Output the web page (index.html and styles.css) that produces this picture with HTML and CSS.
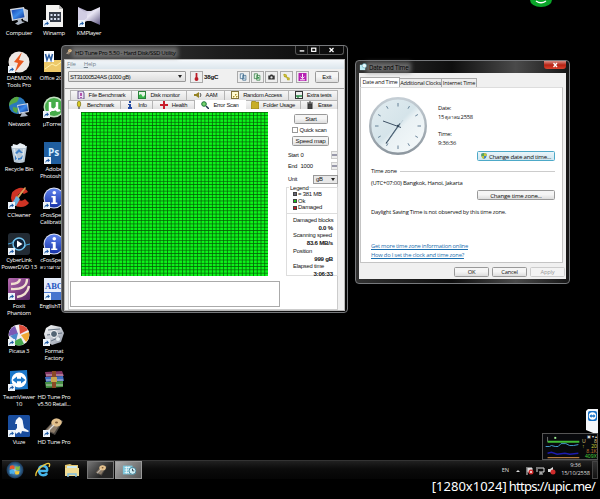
FILE: index.html
```html
<!DOCTYPE html>
<html lang="en">
<head>
<meta charset="utf-8">
<title>Desktop</title>
<link rel="stylesheet" href="styles.css">
</head>
<body>
<svg class="defs" width="0" height="0">
  <defs>
    <linearGradient id="blue" x1="0" y1="0" x2="1" y2="1"><stop offset="0" stop-color="#123fae"/><stop offset=".5" stop-color="#3d8bea"/><stop offset="1" stop-color="#0a2c8c"/></linearGradient>
    <linearGradient id="info" x1="0" y1="0" x2="0" y2="1"><stop offset="0" stop-color="#5f83ee"/><stop offset="1" stop-color="#1833a8"/></linearGradient>
    <linearGradient id="silver" x1="0" y1="0" x2="1" y2="1"><stop offset="0" stop-color="#fff"/><stop offset="1" stop-color="#8b94a3"/></linearGradient>
    <linearGradient id="purple" x1="0" y1="0" x2="1" y2="1"><stop offset="0" stop-color="#b66bb0"/><stop offset="1" stop-color="#512060"/></linearGradient>
    <linearGradient id="km" x1="0" y1="0" x2="1" y2="1"><stop offset="0" stop-color="#9a94b8"/><stop offset=".5" stop-color="#e9e6f4"/><stop offset="1" stop-color="#5d5680"/></linearGradient>
    <radialGradient id="orb"><stop offset="0" stop-color="#a8d5f2"/><stop offset=".6" stop-color="#356fa0"/><stop offset="1" stop-color="#1b3552"/></radialGradient>
    <linearGradient id="face" x1="0" y1="0" x2="1" y2="1"><stop offset="0" stop-color="#e3edf1"/><stop offset=".48" stop-color="#d5e4ea"/><stop offset=".55" stop-color="#e9f1f4"/><stop offset="1" stop-color="#f8fbfc"/></linearGradient>
    <linearGradient id="rim" x1="0" y1="0" x2="0" y2="1"><stop offset="0" stop-color="#c5ced5"/><stop offset="1" stop-color="#8d979f"/></linearGradient>
    <pattern id="cells" width="3.74" height="3.28" patternUnits="userSpaceOnUse"><rect width="3.74" height="3.28" fill="#045e06"/><rect x=".75" y=".7" width="2.99" height="2.58" fill="#0cf41a"/></pattern>
    <symbol id="arrow" viewBox="0 0 7 7"><rect width="7" height="7" fill="#eef4fa"/><path d="M1.4 6Q1.2 3 3.8 2.7V1.2L6 3.4 3.8 5.2V4Q2.2 4 1.4 6" fill="#1d5aa4"/></symbol>
    <symbol id="pc" viewBox="0 0 22 22"><path d="M15 3l5 2v12l-5-2z" fill="#c2c9d4"/><path d="M2 4l14-2 2 11-14 3z" fill="#d4d9e2"/><path d="M3.5 5.2l11.5-1.7 1.5 8.7-11.2 2.3z" fill="url(#blue)"/><path d="M9 14l4-.6 1 3 3 .5-7 3-3-1.5 3-1.6z" fill="#aeb7c4"/></symbol>
    <symbol id="disk" viewBox="0 0 22 22"><path d="M2 15L13 3l7 3-8 14z" fill="#4c4742"/><path d="M3 15L13 4l6 2-8 12z" fill="#8b7b69"/><ellipse cx="13.5" cy="7.5" rx="5.2" ry="4" fill="#e3c18d"/><ellipse cx="13.5" cy="7.5" rx="1.5" ry="1.1" fill="#7a5836"/><path d="M5 16l6-6" stroke="#ddd" stroke-width="1.3"/></symbol>
    <symbol id="infoball" viewBox="0 0 22 22"><circle cx="11" cy="11" r="10.5" fill="#dfe4f5"/><circle cx="11" cy="11" r="9.5" fill="url(#info)"/><circle cx="11.3" cy="5.7" r="1.8" fill="#fff"/><path d="M8.4 9h4.3v6.5h1.6v1.6H8.2v-1.6h1.6v-5H8.4z" fill="#fff"/></symbol>
  </defs>
</svg>
<main class="desktop">
  <section class="icons">
    <div class="item"><svg viewBox="0 0 22 22"><use href="#pc"/></svg><span>Computer</span></div>
    <div class="item"><svg viewBox="0 0 22 22"><circle cx="11" cy="11" r="10.5" fill="#eee8e4"/><path d="M14 1L6 11l4 1-3 9 9-11-5-1z" fill="#ea5a20"/><use href="#arrow" y="15" width="7" height="7"/></svg><span>DAEMON<br>Tools Pro</span></div>
    <div class="item"><svg viewBox="0 0 22 22"><circle cx="9.500" cy="9.500" r="8.500" fill="#2a78bd"/><path d="M4 3q5-4 7-1l-2 4-5 2-3 2q0-5 3-7M5 11l5 1-1 5q-5-1-4-6" fill="#58a743"/><path d="M9 9l11-2 1 9-10 2z" fill="#cfd6e2"/><path d="M10 10l9-1.700 1 6.700-8 1.600z" fill="url(#blue)"/><path d="M14 17h3l3 3-8 1z" fill="#aab4c4"/></svg><span>Network</span></div>
    <div class="item"><svg viewBox="0 0 22 22"><path d="M3 4h16l-2.500 16q-5 2-10.500 0z" fill="#b9c8d6"/><path d="M5 2l4 1 3-2 5 2 1 3H4z" fill="#e9f0f5"/><path d="M6 7l3 11M16 7l-2 11" stroke="#dbe7f0" stroke-width="1.500"/><path d="M7 11l4-4 4 4h-2l-2-1-2 2zM7 13l2 4-2 1zM15 13l-1 4-4 1v-2h2z" fill="#3e7fc6"/></svg><span>Recycle Bin</span></div>
    <div class="item"><svg viewBox="0 0 22 22"><path d="M20 5Q17 0 11 1 3 3 3 11q1 9 10 9 5 0 8-4l-4-4q-3 3-6 1-3-5 1-7 2-1 4 1z" fill="#cf3324"/><path d="M17 0l1 1-8 11-2-1z" fill="#d6a45c"/><path d="M8 9l4 3-4 7-7-1q5-3 7-9" fill="#6fb1dc"/><use href="#arrow" y="15" width="7" height="7"/></svg><span>CCleaner</span></div>
    <div class="item"><svg viewBox="0 0 22 22"><rect width="22" height="22" rx="3" fill="#222b34"/><path d="M0 11q5 0 6-4M22 11q-5 0-6 4" stroke="#48a6de" fill="none"/><circle cx="11" cy="11" r="6" fill="#0d2036" stroke="#72c5f0" stroke-width="1.400"/><path d="M9 7.500l5.500 3.500L9 14.500z" fill="#fff"/><use href="#arrow" y="15" width="7" height="7"/></svg><span>CyberLink<br>PowerDVD 13</span></div>
    <div class="item"><svg viewBox="0 0 22 22"><rect width="22" height="22" rx="1.500" fill="url(#purple)"/><path d="M19 1q0 11-16 10M12 1q-1 5-9 5M21 8q-2 10-12 11" fill="none" stroke="#f0dfcf" stroke-width="2.400"/><use href="#arrow" y="15" width="7" height="7"/></svg><span>Foxit<br>Phantom</span></div>
    <div class="item"><svg viewBox="0 0 22 22"><circle cx="11" cy="11" r="10.500" fill="#f1eff2"/><path d="M11 1q6 0 9 5l-8 4z" fill="#dc4a38"/><path d="M21 8q1 7-3 10l-5-7z" fill="#f0a934"/><path d="M16 20q-7 4-12-2l9-4z" fill="#48a94f"/><path d="M1 12q-1-7 6-10l3 8z" fill="#7c5ab5"/><path d="M2 12l8-3-2 8z" fill="#4c8acb"/><use href="#arrow" y="15" width="7" height="7"/></svg><span>Picasa 3</span></div>
    <div class="item"><svg viewBox="0 0 22 22"><path d="M2 2l17-1 1 19-18 1z" fill="#1b78ca"/><circle cx="11" cy="11" r="7.500" fill="#fff"/><path d="M4.500 11L9 7.500v2.300h4V7.500l4.500 3.500-4.500 3.500v-2.300H9v2.300z" fill="#1b78ca"/><use href="#arrow" y="15" width="7" height="7"/></svg><span>TeamViewer<br>10</span></div>
    <div class="item"><svg viewBox="0 0 22 22"><rect width="22" height="22" rx="1.500" fill="#194d9e"/><path d="M11 2q4 1 4 6l1 5 5 3-1 1-6-1-1 3-2-2-3 2-1-2-2 1 4-5 0-4-2 0 1-4z" fill="#f4f8fc"/><use href="#arrow" y="15" width="7" height="7"/></svg><span>Vuze</span></div>
    <div class="item"><svg viewBox="0 0 22 22"><path d="M3 0h13l4 4v18H3z" fill="#f4f3f1"/><path d="M16 0v4h4z" fill="#b8b7b7"/><path d="M6 7h12v10H6z" fill="#353c48"/><path d="M7.500 9h2v2h-2zM11 9h2v2h-2zM14.500 9h2v2h-2zM7.500 13h2v2h-2zM11 13h2v2h-2zM14.500 13h2v2h-2z" fill="#d5def0"/><use href="#arrow" y="15" width="7" height="7"/></svg><span>Winamp</span></div>
    <div class="item"><svg viewBox="0 0 22 22"><rect x="1" y="9" width="21" height="12" fill="#edc969"/><path d="M2 18l7-5 4 2 8-6" fill="none" stroke="#fff2ae"/><rect x="1" y="0" width="10" height="11" fill="#fafcff"/><path d="M2.500 3l1.500 6 2-5 2 5 1.500-6" fill="none" stroke="#285a9f" stroke-width="1.500"/></svg><span>Office 2010</span></div>
    <div class="item"><svg viewBox="0 0 22 22"><circle cx="11" cy="11" r="10.500" fill="#c2dfc0"/><circle cx="11" cy="11" r="9" fill="#46ad4a"/><path d="M7 16V6M7 12q4 4 7-1V6v8q1 1 3 0" fill="none" stroke="#fff" stroke-width="2.500"/><use href="#arrow" y="15" width="7" height="7"/></svg><span>µTorrent</span></div>
    <div class="item"><svg viewBox="0 0 22 22"><rect x="1" width="21" height="22" fill="#205e9f"/><text class="ps" x="5" y="14">Ps</text><use href="#arrow" x="1" y="15" width="7" height="7"/></svg><span>Adobe<br>Photoshop</span></div>
    <div class="item"><svg viewBox="0 0 22 22"><use href="#infoball"/><use href="#arrow" y="15" width="7" height="7"/></svg><span>cFosSpeed<br>Calibration</span></div>
    <div class="item"><svg viewBox="0 0 22 22"><use href="#infoball"/><use href="#arrow" y="15" width="7" height="7"/></svg><span>cFosSpeed<br><small>ความสามารถ</small></span></div>
    <div class="item"><svg viewBox="0 0 22 22"><rect x="1" width="21" height="22" fill="#e5ecfa"/><path d="M1 14h21v8H1z" fill="#4674ce"/><text class="abc" x="2" y="11">ABC</text><use href="#arrow" x="1" y="15" width="7" height="7"/></svg><span>EnglishThai</span></div>
    <div class="item"><svg viewBox="0 0 22 22"><path d="M3 4l5-3 10 2 3 6-3 9-9 3-6-4-2-7z" fill="url(#silver)"/><path d="M5 6l12-1M4 11l15-2M8 17l9-4" stroke="#647281"/><circle cx="11" cy="10" r="3.500" fill="#536574" stroke="#fff"/><circle cx="15" cy="15" r="2" fill="#e6edf0"/><use href="#arrow" y="15" width="7" height="7"/></svg><span>Format<br>Factory</span></div>
    <div class="item"><svg viewBox="0 0 22 22"><path d="M2 3l17-1 2 5-18 1z" fill="#853765"/><path d="M2 8l18-1 1 5-18 1z" fill="#3d6cc0"/><path d="M2 13l18-1v6l-17 1z" fill="#479346"/><path d="M3 6h17M3 11h17M3 16h17" stroke="#e3d4d8" stroke-width=".8"/><path d="M9 2h4v17H9z" fill="#8a4a26"/><rect x="8" y="8" width="6" height="5" fill="#c7a64f"/></svg><span>HD Tune Pro<br>v5.50 Retail...</span></div>
    <div class="item"><svg viewBox="0 0 22 22"><use href="#disk"/><use href="#arrow" y="15" width="7" height="7"/></svg><span>HD Tune Pro</span></div>
    <div class="item"><svg viewBox="0 0 22 22"><path d="M0 2l9 4h4l9-4v18l-9-4H9l-9 4z" fill="url(#km)"/><path d="M0 2l9 7v4l-9 7z" fill="#d1cde3"/><use href="#arrow" y="15" width="7" height="7"/></svg><span>KMPlayer</span></div>
  </section>

  <section class="window hd">
    <header class="caption"><svg class="cap-icon" viewBox="0 0 22 22"><use href="#disk"/></svg><span>HD Tune Pro 5.50 - Hard Disk/SSD Utility</span>
      <div class="controls"><i><svg viewBox="0 0 12 8"><path d="M4 5h5" stroke="#fff" stroke-width="1.500"/></svg></i><i><svg viewBox="0 0 12 8"><rect x="4" y="2" width="4.500" height="3.500" fill="none" stroke="#fff" stroke-width="1.300"/></svg></i><i class="last"><svg viewBox="0 0 16 8"><path d="M6 2l4 4M10 2L6 6" stroke="#fff" stroke-width="1.300"/></svg></i></div>
    </header>
    <div class="client">
      <nav class="menu"><span><u>F</u>ile</span><span><u>H</u>elp</span></nav>
      <div class="toolbar">
        <div class="drive"><span>ST31000524AS (1000 gB)</span><b class="down"></b></div>
        <div class="tool thermo"><svg viewBox="0 0 10 10"><path d="M5 0v6" stroke="#bb1b25" stroke-width="2.200"/><circle cx="5" cy="7.500" r="2.400" fill="#bb1b25"/></svg></div>
        <strong>38gC</strong>
        <div class="tools">
          <div class="tool"><svg viewBox="0 0 10 10"><path d="M1 1h4v6H1zM4 3h4v6H4z" fill="#eaf4fb" stroke="#376588" stroke-width=".9"/><path d="M5 5h2M5 7h2" stroke="#376588" stroke-width=".6"/></svg></div>
          <div class="tool"><svg viewBox="0 0 10 10"><path d="M1 1h4v6H1zM4 3h4v6H4z" fill="#dff3df" stroke="#337c43" stroke-width=".9"/><path d="M5 5h2v2H5z" fill="#3a9a55"/></svg></div>
          <div class="tool"><svg viewBox="0 0 10 10"><path d="M1 3h2l1-1h2l1 1h2v5H1z" fill="#333"/><circle cx="5" cy="5.500" r="1.400" fill="#e4e4e4"/></svg></div>
          <div class="tool"><svg viewBox="0 0 10 10"><path d="M2 1l3 1 1 3 3 1v3H6L5 6 2 5 1 2z" fill="#b8aa20"/><path d="M3 3l1 1M7 7l1 1" stroke="#fff69b"/></svg></div>
          <div class="tool"><svg viewBox="0 0 10 10"><rect width="10" height="10" fill="#b521b2"/><path d="M5 1v5M2.500 4.500L5 7l2.500-2.500M2 8.500h6" fill="none" stroke="#fff" stroke-width="1.200"/></svg></div>
        </div>
        <button class="exit">Exit</button>
      </div>
      <div class="tabs back">
        <span><svg viewBox="0 0 8 8"><path d="M1 0h5l1 2v6H1z" fill="#e9e0f5" stroke="#45336d" stroke-width=".8"/><path d="M4 2v3M4 6v1" stroke="#a12491" stroke-width="1.500"/></svg>File Benchmark</span>
        <span><svg viewBox="0 0 8 8"><rect x=".5" y=".5" width="7" height="7" fill="#e5f5e5" stroke="#2b823c"/><path d="M1 7V4l2-1 2 3 2-2v3z" fill="#37b64a"/></svg>Disk monitor</span>
        <span><svg viewBox="0 0 8 8"><path d="M0 3h2l3-2v6L2 5H0z" fill="#958224"/><path d="M6 2q2 2 0 4" fill="none" stroke="#555"/></svg>AAM</span>
        <span><svg viewBox="0 0 8 8"><rect x=".5" y=".5" width="7" height="7" fill="#fffbd1" stroke="#81733a"/><path d="M2 6h1V5M4 4h1V3M5 6h1V5" stroke="#b49423"/></svg>Random Access</span>
        <span><svg viewBox="0 0 8 8"><rect x=".5" y=".5" width="7" height="7" fill="#eee" stroke="#333"/><path d="M1 5h6M3 5v2" stroke="#278844" stroke-width="1.300"/></svg>Extra tests</span>
      </div>
      <div class="tabs front">
        <span><svg viewBox="0 0 8 8"><ellipse cx="4" cy="3" rx="1.700" ry="3" fill="#dbcc22" stroke="#78711b" stroke-width=".7"/><path d="M3 7h2" stroke="#666" stroke-width="1.500"/></svg>Benchmark</span>
        <span><svg viewBox="0 0 8 8"><path d="M3 0h2v2H3zM2 3h3v3h1v2H2V6h1V4H2z" fill="#244ba3"/></svg>Info</span>
        <span><svg viewBox="0 0 8 8"><path d="M3 0h2v3h3v2H5v3H3V5H0V3h3z" fill="#c81e2c"/></svg>Health</span>
        <span class="active"><svg viewBox="0 0 8 8"><circle cx="3" cy="3" r="2.300" fill="#75d36d" stroke="#19733b"/><path d="M5 5l3 3" stroke="#1d334d" stroke-width="1.500"/></svg>Error Scan</span>
        <span><svg viewBox="0 0 8 8"><path d="M0 2l1-2h3l1 1h3v7H0z" fill="#c7ae28" stroke="#6e631b" stroke-width=".5"/></svg>Folder Usage</span>
        <span><svg viewBox="0 0 8 8"><path d="M1 2h6M3 1h2M2 3h4v5H2z" stroke="#333" fill="#444"/></svg>Erase</span>
      </div>
      <div class="scan-page">
        <div class="scan-left">
          <svg class="grid" viewBox="0 0 187 164"><rect width="187" height="164" fill="url(#cells)"/></svg>
          <div class="log"></div>
        </div>
        <aside>
          <button class="start">Start</button>
          <label class="quick"><i></i>Quick scan</label>
          <button class="speed">Speed map</button>
          <div class="field"><span>Start</span><em>0</em><i class="spin"></i></div>
          <div class="field"><span>End</span><em>1000</em><i class="spin"></i></div>
          <div class="field unit"><span>Unit</span><div class="select">gB<b class="down"></b></div></div>
          <fieldset><legend>Legend</legend>
            <p><i class="gray"></i>= 381 MB</p><p><i class="ok"></i>Ok</p><p><i class="bad"></i>Damaged</p>
            <dl><dt>Damaged blocks</dt><dd>0.0 %</dd><dt>Scanning speed</dt><dd>83.6 MB/s</dd><dt>Position</dt><dd>999 gB</dd><dt>Elapsed time</dt><dd>3:06:33</dd></dl>
          </fieldset>
        </aside>
      </div>
    </div>
  </section>

  <section class="window date">
    <header class="caption"><svg class="cap-icon" viewBox="0 0 9 9"><rect x="1" y="2" width="6" height="6" fill="#bdebf3"/><circle cx="6" cy="3" r="2.500" fill="#e9f8fb" stroke="#4d9cab" stroke-width=".6"/></svg><span>Date and Time</span><i class="close"><svg viewBox="0 0 22 8"><path d="M9.500 2l3.500 4M13 2L9.500 6" stroke="#fff" stroke-width="1.300"/></svg></i></header>
    <div class="client">
      <div class="dt-tabs"><span class="active">Date and Time</span><span>Additional Clocks</span><span>Internet Time</span></div>
      <div class="dt-page">
        <div class="now">
          <svg class="clock" viewBox="-29 -29 58 58"><circle r="27.800" fill="url(#face)" stroke="url(#rim)" stroke-width="2.400"/><g stroke="#57758c" stroke-width=".9"><path d="M0-23v3.500M0 23v-3.500M-23 0h3.500M23 0h-3.500"/><path d="M11.500-19.900l-1.500 2.600M19.900-11.500l-2.600 1.500M19.900 11.500l-2.600-1.500M11.500 19.900l-1.500-2.600M-11.500 19.900l1.500-2.600M-19.900 11.500l2.600-1.500M-19.900-11.500l2.600 1.500M-11.500-19.900l1.500 2.600"/></g><path d="M3 1.500L-15-5" stroke="#3f5266" stroke-width="1"/><path d="M2-2.500L-12 17.500" stroke="#273d52" stroke-width="1.200"/><path d="M-11 16L5-6" stroke="#8fa8b8" stroke-width=".4"/><circle r="1.200" fill="#33495d"/></svg>
          <div class="when"><p>Date:</p><p>15 <small>ตุลาคม</small> 2558</p><p class="time">Time:</p><p>9:36:36</p></div>
        </div>
        <button class="wide hot"><svg viewBox="0 0 8 8"><path d="M4 0l3.500 1v3Q7 7 4 8 1 7 .5 4V1z" fill="#4282c1"/><path d="M4 0l3.500 1v3H4zM4 4v4Q1 7 .5 4z" fill="#c4c83a"/><path d="M4 0L.5 1v3H4z" fill="#58a35b"/></svg>Change date and time...</button>
        <h2>Time zone</h2>
        <p class="zone">(UTC+07:00) Bangkok, Hanoi, Jakarta</p>
        <button class="wide">Change time zone...</button>
        <p class="dst">Daylight Saving Time is not observed by this time zone.</p>
        <div class="more"><a>Get more time zone information online</a></div>
        <div class="how"><a>How do I set the clock and time zone?</a></div>
      </div>
      <footer><button>OK</button><button>Cancel</button><button class="disabled">Apply</button></footer>
    </div>
  </section>

  <svg class="green-badge" viewBox="0 0 24 7"><path d="M1 0a11 7 0 0 0 22 0z" fill="#0aa52a"/><path d="M7 1q5 3.500 10 0" fill="none" stroke="#fff" stroke-width="1.300"/></svg>
  <svg class="tv-tag" viewBox="0 0 12 26"><path d="M0 2l2-2h10v26L0 21z" fill="#f5f7fa"/><rect x="2" y="2" width="9" height="10" rx="2" fill="#1672c8"/><circle cx="6.500" cy="7" r="3.700" fill="#fff"/><path d="M3.500 7L5.500 5v1.300h2V5l2 2-2 2V7.700h-2V9z" fill="#1672c8"/></svg>
  <div class="gadget"><svg viewBox="0 0 38 26"><path d="M4 8h33" stroke="#3fbd35" stroke-width="2"/><path d="M4 3v5" stroke="#8c8c8c" stroke-width=".8"/><path d="M2 13h4l2-1 4 1h3l3-3h5l4 2h4l5-1" stroke="#479ed1" fill="none"/><path d="M4 20l4-1 6 2 8-1 5 1 9-1" stroke="#1c1bad" stroke-width="1.600" fill="none"/><path d="M4 24.500h33" stroke="#b47a3c" stroke-width="1.200"/><path d="M11 4h2" stroke="#9ff294" stroke-width="2"/></svg><ul><li class="g0">▣ ▾ ▴</li><li class="g1"><span>U</span>8</li><li class="g2"><span>↑</span>20</li><li class="g3">8.1K</li><li class="g4">409X</li></ul></div>

  <footer class="taskbar">
    <svg class="orb" viewBox="0 0 18 18"><circle cx="9" cy="9" r="8.500" fill="url(#orb)"/><path d="M4 5q2.500-1.500 4.500 0v3.500Q6 7 3.500 8.500z" fill="#e7562b"/><path d="M9.500 5.200q2 1 4.500-.2l-.5 3.700q-2 1-4 0z" fill="#86bd3c"/><path d="M3.500 9.500q2.500-1.300 4.700 0l-.2 3.500Q6 12 3.800 13z" fill="#4bb0ea"/><path d="M9.300 9.700q2 1 4.200 0L13 13q-2 1-3.900 0z" fill="#f5ca38"/></svg>
    <svg class="ie" viewBox="0 0 16 16"><path d="M12.800 9H4Q3.500 4 8 4q4.300 0 4.300 4.700M4 9q.3 4.200 4.300 4.200 2.500 0 3.900-2" fill="none" stroke="#47b7ec" stroke-width="2.400"/><path d="M1 14Q0 10 6 5q7-5 8.500-3 .5 1-.5 3" fill="none" stroke="#efc83a" stroke-width="1.300"/></svg>
    <svg class="folder" viewBox="0 0 16 16"><path d="M1 3l5-1 2 1h6v11H1z" fill="#e7c970"/><path d="M3 4h10v4H3z" fill="#cceaf3"/><path d="M1 6h14v8H1z" fill="#f0dc94"/><path d="M4 15v-3h8v3" fill="none" stroke="#80bedf" stroke-width="1.500"/></svg>
    <div class="task"><svg viewBox="0 0 22 22"><use href="#disk"/></svg></div>
    <div class="task on"><svg viewBox="0 0 16 16"><rect x="1" y="3" width="11" height="10" fill="#7dc7dc"/><path d="M3 5h7M3 8h7M3 11h7M5 4v8M8 4v8" stroke="#eef8fa"/><circle cx="12" cy="9" r="4" fill="#d2eff5" stroke="#367d94"/><path d="M12 6.500V9h2" fill="none" stroke="#234"/></svg></div>
    <span class="lang">EN</span>
    <svg class="tray" viewBox="0 0 40 9"><path d="M0 6l2-2 2 2z" fill="#ddd"/><path d="M11 1v8M12 2h4v4h-4z" stroke="#ddd" fill="#ddd"/><circle cx="15" cy="6" r="2.500" fill="#cf2b2b"/><path d="M14 5l2 2M16 5l-2 2" stroke="#fff" stroke-width=".7"/><path d="M22 2h6v4h-5M25 6v2M23 8h4M21 1v5" stroke="#ddd" fill="none"/><path d="M32 3h2l3-2v7l-3-2h-2z" fill="#ddd"/><circle cx="37" cy="6" r="2.500" fill="#cf2b2b"/></svg>
    <div class="clocktext">9:36<br>15/10/2558</div>
    <i class="peek"></i>
  </footer>
  <div class="watermark"><span>[1280x1024]</span><span class="url">https://upic.me/</span></div>
</main>
</body>
</html>
```
FILE: styles.css
```css
* { box-sizing: border-box; }
body { margin: 0; background: #000; font-family: "Open Sans", "Noto Sans", sans-serif; font-size: 5.8px; color: #111; }
svg { display: block; flex: none; }
p, dl, dd, h2, ul, fieldset { margin: 0; padding: 0; }
i, em { font-style: normal; }
.defs { position: absolute; }
.desktop { position: relative; width: 600px; height: 499px; overflow: hidden; background: #000; }

.icons { display: grid; grid-template-rows: repeat(10, 45.55px); grid-auto-columns: 35px; grid-auto-flow: column; padding: 5px 0 0 1.5px; width: 107px; }
.item { display: flex; flex-direction: column; align-items: center; color: #fff; text-align: center; white-space: nowrap; line-height: 7px; font-size: 6px; letter-spacing: -.25px; }
.item small { font-size: 4.8px; }
.item svg { width: 22px; height: 22px; margin-bottom: 2.5px; letter-spacing: 0; }
.ps { font: bold 10px "Open Sans", sans-serif; fill: #d5edff; }
.abc { font: bold 8.5px "Liberation Serif", serif; fill: #2454c1; }

.window { position: absolute; border: 1px solid #77797c; border-radius: 4px; background: #161616; }
.hd { left: 61px; top: 45px; width: 287px; height: 268px; padding: 0 2px 2px 2px; background: linear-gradient(90deg, #454545, #1d1d1d 55%, #080808); }
.date { left: 355px; top: 60px; width: 215px; height: 224px; padding: 0 3px 4px; background: linear-gradient(90deg, #323232, #0e0e0e 45%, #4a4a4a 75%, #151515); }
.caption { display: flex; align-items: center; height: 12px; gap: 2px; }
.caption span { background: #858585b0; box-shadow: 0 0 4px 3px #858585b0; color: #000; white-space: nowrap; line-height: 5px; }
.cap-icon { position: relative; width: 8px; height: 8px; }

.client { background: #f0f0f0; }
.hd .caption { height: 12.5px; padding-left: 1px; font-size: 6.1px; letter-spacing: -.34px; }
.hd .client { height: 252px; border: 1px solid #b9b9b9; font-family: "Liberation Sans", sans-serif; font-size: 5.9px; letter-spacing: -.2px; }
.controls { display: flex; align-self: flex-start; margin-left: auto; border: 1px solid #555; border-top: 0; border-radius: 0 0 3px 3px; margin-right: 1px; }
.controls i { width: 12px; height: 8px; border-right: 1px solid #444; }
.controls .last { width: 23px; border: 0; }
.controls svg { width: 100%; height: 8px; }
.menu { display: flex; gap: 8px; height: 9px; padding-left: 2px; background: linear-gradient(#f5f8fb, #dce6ed); color: #75838e; font: 6px/8px "Open Sans", sans-serif; }
.toolbar { display: flex; align-items: center; height: 20.5px; padding: 0 0 3px 3px; border-bottom: 1px solid #a0a0a0; }
.drive { display: flex; align-items: center; justify-content: space-between; width: 118px; height: 11px; padding: 0 3px 0 1px; border: 1px solid #999; border-radius: 1px; background: linear-gradient(#f4f4f4, #dedede); font-size: 5.9px; letter-spacing: -.4px; }
.down { border: 2px solid transparent; border-top: 3px solid #222; border-bottom: 0; }
.tool { width: 13px; height: 12px; padding: 1px; border: 1px solid #aaa; background: #eee; }
.tool svg { width: 9px; height: 8px; margin: auto; }
.thermo { margin-left: 4px; }
.toolbar strong { width: 13px; margin-left: 1px; font-size: 6.2px; letter-spacing: -.25px; }
.tools { display: flex; gap: 1.2px; margin-left: 20px; }
.tools .tool:last-child { margin-left: 2px; }
button { display: flex; align-items: center; justify-content: center; gap: 2px; padding: 0; border: 1px solid #999; border-radius: 1.5px; background: linear-gradient(#f5f5f5 45%, #ddd); font: inherit; letter-spacing: inherit; color: #111; white-space: nowrap; }
.exit { width: 24px; height: 12px; margin-left: 6px; }
.tabs { display: grid; height: 9.5px; font-size: 5.8px; letter-spacing: -.25px; }
.tabs span { display: flex; align-items: center; justify-content: center; gap: 4px; border: 1px solid #b5b5b5; border-left-width: 0; border-bottom: 0; background: linear-gradient(#f7f7f7, #e2e2e2); white-space: nowrap; }
.tabs svg { width: 8px; height: 8px; }
.back { grid-template-columns: 62px 55px 38px 64px 49px; margin: 1px 0 0 5px; }
.front { grid-template-columns: 53px 32px 42px 51px 55px 37px; margin-left: 3px; }
.tabs span:first-child { border-left-width: 1px; }
.tabs .active { background: #fff; border-color: #fff; }
.scan-page { display: flex; justify-content: space-between; height: 201px; margin: 0 6px 0 3px; padding: 3px 0 0 1px; background: #fff; border: 1px solid #ccc; border-top: 0; }
.grid { width: 187px; height: 164px; margin: 0 0 5px 11px; }
.log { width: 210px; height: 26px; border: 1px solid #aaa; }
aside { width: 52px; padding-top: 1.5px; margin-right: -1px; }
.start { width: 34px; height: 10px; margin-left: 8px; }
.speed { width: 37px; height: 10px; margin-left: 6px; font-size: 6.2px; }
.quick { display: flex; align-items: center; height: 12px; gap: 1.5px; padding-left: 6px; white-space: nowrap; }
.quick i { width: 6px; height: 6px; border: 1px solid #999; }
.speed + .field { margin-top: 4px; }
.field { display: flex; align-items: center; height: 11px; padding-left: 2px; }
.field span { width: 12.5px; font-size: 5.6px; letter-spacing: -.25px; }
.field em { flex: 1; }
.spin { width: 7px; height: 8px; border: 1px solid #ccc; background: linear-gradient(#eee 30%, #99a 30% 42%, #eee 42% 58%, #99a 58% 70%, #eee 70%); }
.unit { margin-top: 2px; }
.select { display: flex; align-items: center; justify-content: space-between; width: 25px; height: 9px; margin-left: auto; padding: 0 2px; border: 1px solid #999; background: #e8e8e8; }
fieldset { height: 91px; border: 1px solid #ddd; min-width: 0; line-height: 6.5px; }
legend { margin-left: 2px; padding: 0 1px; }
fieldset p { display: flex; align-items: center; gap: 1.5px; margin-left: 5.5px; height: 6.7px; }
fieldset i { width: 4px; height: 4px; background: #667; border: .5px solid #444; }
fieldset .ok { background: #16c41f; }
fieldset .bad { background: #c61625; }
dl { margin-top: 2px; padding: 2px 4px 0 6px; border-top: 1px solid #ddd; font-size: 5.8px; white-space: nowrap; }
dt { height: 7.9px; line-height: 8px; }
dd { height: 7.4px; line-height: 7px; font-weight: bold; text-align: right; font-size: 6.1px; }

.date .caption { padding-left: 0; font-size: 6.2px; letter-spacing: -.2px; }
.close { align-self: flex-start; width: 22px; height: 8px; margin: 0 0 0 auto; background: linear-gradient(#d99087, #b82213 50%, #d7432f); border-radius: 0 0 3px 3px; }
.close svg { width: 22px; height: 8px; }
.date .client { height: 206px; padding: 4px 3px 0 1px; letter-spacing: -.23px; }
.dt-tabs { display: flex; align-items: flex-end; height: 10px; }
.dt-tabs span { height: 9px; line-height: 8px; border: 1px solid #aaa; border-bottom: 0; background: #eee; text-align: center; white-space: nowrap; width: 42px; font-size: 5.6px; }
.dt-tabs span + span { border-left: 0; }
.dt-tabs .active { width: 40px; height: 10px; background: #fff; }
.dt-tabs span:last-child { width: 35px; }
.dt-page { display: flex; flex-direction: column; height: 176px; padding: 9px 7px 0 10px; border: 1px solid #c4c4c4; border-top-color: #ddd; background: #fff; white-space: nowrap; }
.now { display: flex; height: 54px; }
.clock { width: 58px; height: 58px; margin-left: -2.5px; }
.when { margin: 6.5px 0 0 11.5px; line-height: 9px; font-size: 5.8px; }
.when .time { margin-top: 8.5px; }
.when small { font-size: 4.5px; }
.wide { width: 78px; height: 10px; flex: none; margin-left: auto; font-size: 6.1px; }
.hot { border-color: #4da9c8; background: linear-gradient(#eaf5fa, #cfe6ef); }
.hot svg { width: 6px; height: 6px; }
h2 { display: flex; align-items: center; gap: 3px; height: 8px; margin-top: 6px; font-size: 5.8px; font-weight: normal; }
h2::after { content: ""; flex: 1; border-top: 1px solid #ccc; }
.zone { height: 9px; line-height: 9px; margin: 4px 0 2px; font-size: 5.9px; }
.dst { height: 9px; line-height: 9px; margin-top: 8px; }
.more, .how { height: 9px; line-height: 9px; color: #1b6eae; text-decoration: underline; }
.more { margin-top: 25px; }
.date footer { display: flex; justify-content: flex-end; gap: 3px; padding-top: 4px; margin-right: -2px; }
.date footer button { width: 35px; height: 10px; font-size: 5.8px; }
.date .disabled { color: #999; border-color: #ccc; background: #f3f3f3; }

.green-badge { position: absolute; left: 529px; top: 0; width: 24px; height: 7px; }
.tv-tag { position: absolute; left: 586px; top: 409px; width: 12px; height: 26px; }
.gadget { position: absolute; left: 542px; top: 433px; width: 56px; height: 27px; display: flex; justify-content: space-between; border: 1px solid #555; background: #08090c; }
.gadget svg { width: 38px; height: 25px; }
.gadget ul { list-style: none; width: 15px; color: #ddd; font: 5.2px/5.1px "Liberation Sans", sans-serif; text-align: right; }
.gadget li { height: 5.1px; white-space: nowrap; }
.gadget li span { float: left; }
.gadget .g0 { font-size: 4px; }
.gadget .g1 { color: #d1bc70; }
.gadget .g2 { color: #c6cb34; }
.gadget .g3 { color: #b26d2e; }
.gadget .g4 { color: #45c83a; }

.taskbar { position: absolute; left: 2px; top: 460px; width: 596px; height: 19px; display: flex; align-items: center; border-top: 1px solid #333; background: linear-gradient(#202020, #0b0b0b 45%, #050505); color: #ddd; font-size: 5.7px; letter-spacing: -.15px; }
.orb { width: 18px; height: 18px; margin-left: 4px; }
.ie { width: 16px; height: 16px; margin-left: 11px; }
.folder { width: 16px; height: 16px; margin-left: 13px; }
.task { display: flex; align-items: center; justify-content: center; width: 27px; height: 18px; margin-left: 7px; border: 1px solid #777; background: linear-gradient(135deg, #777, #252525 65%); }
.task svg { width: 14px; height: 14px; }
.task + .task { margin-left: 1px; }
.task.on { background: linear-gradient(135deg, #aaa, #555); border-color: #999; }
.lang { margin-left: auto; }
.tray { width: 40px; height: 9px; margin-left: 7px; }
.clocktext { width: 31px; margin-left: 4px; text-align: center; line-height: 7.6px; }
.peek { width: 6px; height: 18px; margin-left: 1px; border: 1px solid #444; background: linear-gradient(#333, #111); }
.watermark { position: absolute; right: 5px; top: 478px; height: 20px; display: flex; gap: 2px; color: #fff; font: 13px/17px "Noto Sans", sans-serif; white-space: nowrap; }
.watermark span { letter-spacing: 0; }
.watermark .url { letter-spacing: -.75px; }
```
